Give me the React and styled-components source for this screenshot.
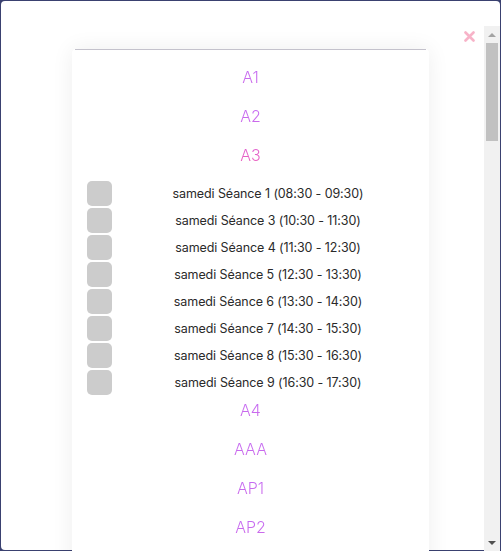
import React from "react";
import styled, { createGlobalStyle } from "styled-components";

const GlobalStyle = createGlobalStyle`
  html, body {
    margin: 0;
    padding: 0;
    background: #3a4170;
    height: 100%;
    overflow: hidden;
  }
  body {
    font-family: Inter, "Open Sans", sans-serif;
  }
`;

const groups = [
  { name: "A1" },
  { name: "A2" },
  {
    name: "A3",
    open: true,
    seances: [
      "samedi Séance 1 (08:30 - 09:30)",
      "samedi Séance 3 (10:30 - 11:30)",
      "samedi Séance 4 (11:30 - 12:30)",
      "samedi Séance 5 (12:30 - 13:30)",
      "samedi Séance 6 (13:30 - 14:30)",
      "samedi Séance 7 (14:30 - 15:30)",
      "samedi Séance 8 (15:30 - 16:30)",
      "samedi Séance 9 (16:30 - 17:30)",
    ],
  },
  { name: "A4" },
  { name: "AAA" },
  { name: "AP1" },
  { name: "AP2" },
];

export default function App() {
  return (
    <>
      <GlobalStyle />
      <Modal>
        <CloseButton aria-label="Fermer">
          <svg width="11" height="11" viewBox="0 0 11 11">
            <path
              d="M1.5 1.5 L9.5 9.5 M9.5 1.5 L1.5 9.5"
              stroke="#f7b3c8"
              strokeWidth="2.6"
              strokeLinecap="round"
            />
          </svg>
        </CloseButton>
        <Body>
          <Scroller>
            <Card>
              <TopRule />
              {groups.map((g) => (
                <React.Fragment key={g.name}>
                  <GroupTitle open={g.open}>{g.name}</GroupTitle>
                  {g.seances && (
                    <SeanceList>
                      {g.seances.map((s) => (
                        <SeanceRow key={s}>
                          <Check />
                          <SeanceLabel>{s}</SeanceLabel>
                        </SeanceRow>
                      ))}
                    </SeanceList>
                  )}
                </React.Fragment>
              ))}
            </Card>
          </Scroller>
          <ScrollTrack>
            <ArrowButton>
              <svg width="8" height="4" viewBox="0 0 8 4">
                <path d="M0 4 L4 0 L8 4 Z" fill="#a3a3a3" />
              </svg>
            </ArrowButton>
            <TrackArea>
              <Thumb />
            </TrackArea>
            <ArrowButton>
              <svg width="8" height="4" viewBox="0 0 8 4">
                <path d="M0 0 L8 0 L4 4 Z" fill="#505050" />
              </svg>
            </ArrowButton>
          </ScrollTrack>
        </Body>
      </Modal>
    </>
  );
}

const Modal = styled.div`
  position: relative;
  margin: 1px 0 0 1px;
  width: 499px;
  height: 549px;
  background: #ffffff;
  border-radius: 4px;
  padding-top: 25px;
  box-sizing: border-box;
  display: flex;
  flex-direction: column;
`;

const CloseButton = styled.button`
  position: absolute;
  top: 30px;
  right: 25px;
  padding: 0;
  border: 0;
  background: none;
  line-height: 0;
  cursor: pointer;
`;

const Body = styled.div`
  flex: 1;
  display: flex;
  min-height: 0;
  margin-bottom: -1px;
`;

const Scroller = styled.div`
  flex: 1;
  overflow: hidden;
  padding: 23px 0 0 71px;
`;

const Card = styled.div`
  width: 357px;
  min-height: 2640px;
  background: #ffffff;
  border-radius: 4px;
  box-shadow: 0 0 22px rgba(0, 0, 0, 0.07);
  padding-top: 13px;
  box-sizing: border-box;
  position: relative;
`;

const TopRule = styled.div`
  position: absolute;
  top: 0;
  left: 3px;
  right: 3px;
  height: 1px;
  background: #c4c2cc;
`;

const GroupTitle = styled.div`
  height: 30px;
  line-height: 30px;
  margin-bottom: 9px;
  text-align: center;
  font-size: 16px;
  font-weight: 300;
  background: ${(p) =>
    p.open
      ? "linear-gradient(180deg, #dc62d8 0%, #ee5fb6 100%)"
      : "linear-gradient(180deg, #c06af6 0%, #cf6ae6 100%)"};
  -webkit-background-clip: text;
  background-clip: text;
  color: transparent;
  width: fit-content;
  margin-left: auto;
  margin-right: auto;
`;

const SeanceList = styled.div`
  padding-top: 1px;
  margin-bottom: -1px;
`;

const SeanceRow = styled.div`
  height: 27px;
  display: flex;
  align-items: center;
  padding: 0 5px 0 15px;
`;

const Check = styled.div`
  width: 25px;
  height: 25px;
  border-radius: 5px;
  background: #cccccc;
  flex-shrink: 0;
`;

const SeanceLabel = styled.div`
  flex: 1;
  text-align: center;
  font-size: 12.5px;
  color: #2a2a2a;
  letter-spacing: -0.1px;
`;

const ScrollTrack = styled.div`
  width: 16px;
  background: #f1f1f1;
  display: flex;
  flex-direction: column;
`;

const ArrowButton = styled.div`
  height: 17px;
  display: flex;
  align-items: center;
  justify-content: center;
`;

const TrackArea = styled.div`
  flex: 1;
  padding: 0 2px;
`;

const Thumb = styled.div`
  height: 98px;
  background: #c1c1c1;
`;
